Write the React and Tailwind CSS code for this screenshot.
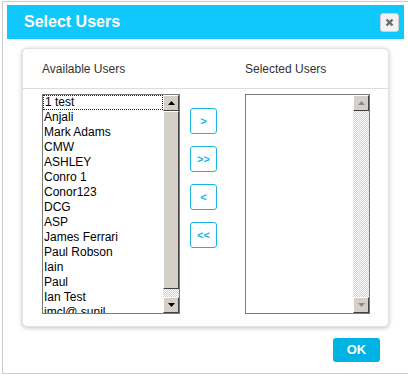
import React from 'react'

const users = [
  '1 test',
  'Anjali',
  'Mark Adams',
  'CMW',
  'ASHLEY',
  'Conro 1',
  'Conor123',
  'DCG',
  'ASP',
  'James Ferrari',
  'Paul Robson',
  'Iain',
  'Paul',
  'Ian Test',
  'imcl@ sunil',
]

function Arrow({ up, disabled }) {
  return (
    <svg width="7" height="4" viewBox="0 0 7 4" className="block">
      <polygon
        points={up ? '0,4 7,4 3.5,0' : '0,0 7,0 3.5,4'}
        fill={disabled ? '#8a8a8a' : '#000'}
      />
    </svg>
  )
}

function ScrollButton({ up, disabled }) {
  return (
    <div className="w-[16px] h-[16px] shrink-0 bg-[#d4d0c8] border-t border-l border-t-white border-l-white border-r border-b border-r-[#404040] border-b-[#404040] flex items-center justify-center">
      <Arrow up={up} disabled={disabled} />
    </div>
  )
}

function Scrollbar({ disabled }) {
  return (
    <div className="w-[16px] h-full flex flex-col bg-[image:repeating-conic-gradient(#d4d0c8_0%_25%,#ffffff_0%_50%)] bg-[length:2px_2px]">
      <ScrollButton up disabled={disabled} />
      {disabled ? (
        <div className="flex-1" />
      ) : (
        <>
          <div className="h-[178px] bg-[#d4d0c8] border-t border-l border-t-white border-l-white border-r border-b border-r-[#404040] border-b-[#404040]" />
          <div className="flex-1" />
        </>
      )}
      <ScrollButton disabled={disabled} />
    </div>
  )
}

function MoveButton({ label }) {
  return (
    <button
      type="button"
      className="w-[27px] h-[26px] rounded-[3px] border border-[#1cb4e2] bg-white text-[#1cb4e2] text-[11px] font-bold leading-none flex items-center justify-center"
    >
      {label}
    </button>
  )
}

export default function App() {
  return (
    <div className="w-[408px] h-[375px] bg-white overflow-hidden font-['Liberation_Sans',Arial,sans-serif]">
      <div className="ml-[2px] mt-[1px] w-[430px] h-[373px] border border-[#cdcdcd] pt-[3px] pl-[4px]">
        <div className="w-[397px] h-[34px] bg-[#10c8fc] flex items-center justify-between pl-[17px] pr-[5px]">
          <h1 className="text-white text-[16px] font-bold leading-none">Select Users</h1>
          <button
            type="button"
            className="w-[19px] h-[19px] rounded-[3px] border border-[#cfcfcf] bg-[#f2f2f2] flex items-center justify-center"
          >
            <svg width="9" height="9" viewBox="0 0 9 9">
              <path d="M1.5 1.5L7.5 7.5M7.5 1.5L1.5 7.5" stroke="#6b6b6b" strokeWidth="2.4" />
            </svg>
          </button>
        </div>

        <div className="w-[397px]">
          <div className="ml-[15px] mt-[9px] w-[367px] h-[279px] bg-white rounded-[5px] border border-[#e2e2e2] shadow-[0_1px_4px_rgba(0,0,0,0.25)]">
            <div className="h-[40px] border-b border-[#dcdcdc] flex items-center text-[12px] text-[#333]">
              <span className="ml-[19px] w-[203px]">Available Users</span>
              <span>Selected Users</span>
            </div>
            <div className="flex pt-[5px] pl-[19px]">
              <div className="w-[138px] h-[220px] border border-[#7a7a7a] flex bg-white">
                <ul className="flex-1 overflow-hidden text-[12px] leading-[15px] text-black">
                  {users.map((u, i) => (
                    <li
                      key={u}
                      className={
                        i === 0
                          ? 'pl-px border border-dotted border-[#1a1a5a] leading-[13px] whitespace-nowrap'
                          : 'pl-[1px] whitespace-nowrap'
                      }
                    >
                      {u}
                    </li>
                  ))}
                </ul>
                <Scrollbar />
              </div>

              <div className="ml-[10px] pt-[14px] flex flex-col gap-[12px]">
                <MoveButton label=">" />
                <MoveButton label=">>" />
                <MoveButton label="<" />
                <MoveButton label="<<" />
              </div>

              <div className="ml-[28px] w-[125px] h-[220px] border border-[#7a7a7a] flex bg-white">
                <div className="flex-1" />
                <Scrollbar disabled />
              </div>
            </div>
          </div>

          <div className="flex justify-end pr-[24px] mt-[11px]">
            <button
              type="button"
              className="w-[47px] h-[24px] rounded-[3px] bg-[#00b3e3] text-white text-[13px] font-bold flex items-center justify-center"
            >
              OK
            </button>
          </div>
        </div>
      </div>
    </div>
  )
}
